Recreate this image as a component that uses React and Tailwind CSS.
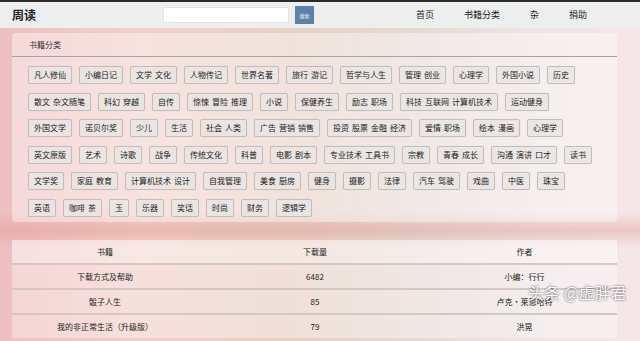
import React from "react";

const rows = [
  ["凡人修仙", "小编日记", "文学 文化", "人物传记", "世界名著", "旅行 游记", "哲学与人生", "管理 创业", "心理学", "外国小说", "历史"],
  ["散文 杂文随笔", "科幻 穿越", "自传", "惊悚 冒险 推理", "小说", "保健养生", "励志 职场", "科技 互联网 计算机技术", "运动健身"],
  ["外国文学", "诺贝尔奖", "少儿", "生活", "社会 人类", "广告 营销 销售", "投资 股票 金融 经济", "爱情 职场", "绘本 漫画", "心理学"],
  ["英文原版", "艺术", "诗歌", "战争", "传统文化", "科普", "电影 剧本", "专业技术 工具书", "宗教", "青春 成长", "沟通 演讲 口才", "读书"],
  ["文学奖", "家庭 教育", "计算机技术 设计", "自我管理", "美食 厨房", "健身", "摄影", "法律", "汽车 驾驶", "戏曲", "中医", "珠宝"],
  ["英语", "咖啡 茶", "玉", "乐器", "笑话", "时尚", "财务", "逻辑学"],
];

const books = [
  { name: "下载方式及帮助", count: 6482, author: "小编：行行" },
  { name: "骰子人生", count: 85, author: "卢克·莱恩哈特" },
  { name: "我的非正常生活（升级版）", count: 79, author: "洪晃" },
];

const Tag = ({ label }) => (
  <span className="flex items-center gap-[3px] h-[18px] px-[5px] rounded-[2px] border border-[#c4bdba] bg-[#e9e5e3]/85 text-[8px] leading-[12px] text-[#222] shadow-[0_0_1px_rgba(0,0,0,0.15)]">
    {label.split(" ").map((w, i) => (
      <span key={i}>{w}</span>
    ))}
  </span>
);

export default function App() {
  return (
    <div
      className="relative w-[640px] h-[341px] overflow-hidden bg-[linear-gradient(180deg,transparent_212px,rgba(222,140,130,0.35)_230px,transparent_248px),linear-gradient(90deg,#eebfc0_0%,#f2d0ca_22%,#e8d0c4_45%,#e6dad5_65%,#f0e4e5_85%,#f6e6e8_100%)]"
      style={{ fontFamily: '"Noto Sans CJK SC", "Noto Sans", sans-serif' }}
    >
      {/* Top bar */}
      <div className="h-[2px] bg-[#2b2b2b]" />
      <div className="flex items-center h-[26px] bg-[#edefef] text-[#222]">
        <div className="w-[163px] pl-[12px] text-[12px] font-bold">周读</div>
        <div className="w-[126px] h-[16px] bg-white border border-[#e4e4e4]" />
        <button className="ml-[6px] w-[19px] h-[18px] bg-[#5b83a7] text-white text-[5px] leading-none">
          搜索
        </button>
        <nav className="flex gap-[30px] ml-[102px] text-[9px]">
          <span>首页</span>
          <span>书籍分类</span>
          <span>杂</span>
          <span>捐助</span>
        </nav>
      </div>

      {/* Category panel */}
      <div className="mt-[5px] mx-[12px] w-[605px] h-[189px] rounded-[4px] bg-white/40">
        <div className="h-[24px] flex items-center pl-[17px] text-[8px] text-[#333] border-b border-[#a9a3a1]">
          书籍分类
        </div>
        <div className="flex flex-col gap-[8.6px] pt-[9px] pl-[16px]">
          {rows.map((r, i) => (
            <div key={i} className="flex gap-[7px]">
              {r.map((t, j) => (
                <Tag key={j} label={t} />
              ))}
            </div>
          ))}
        </div>
      </div>

      {/* Book table */}
      <div className="mt-[18px] mx-[12px] w-[605px] text-[8px] text-[#222]">
        <div className="grid grid-cols-[186px_234px_1fr] h-[23px] items-center text-center bg-white/50">
          <span>书籍</span>
          <span>下载量</span>
          <span>作者</span>
        </div>
        {books.map((b) => (
          <div
            key={b.name}
            className="grid grid-cols-[186px_234px_1fr] h-[25px] items-center text-center border-t-2 border-[#d6c7c2] bg-white/35"
          >
            <span>{b.name}</span>
            <span>{b.count}</span>
            <span>{b.author}</span>
          </div>
        ))}
      </div>

      {/* Watermark */}
      <div className="absolute left-[528px] top-[280px] text-[16px] text-white [text-shadow:0_0_2px_rgba(0,0,0,0.8)]">
        头条 @虚胖君
      </div>
    </div>
  );
}
